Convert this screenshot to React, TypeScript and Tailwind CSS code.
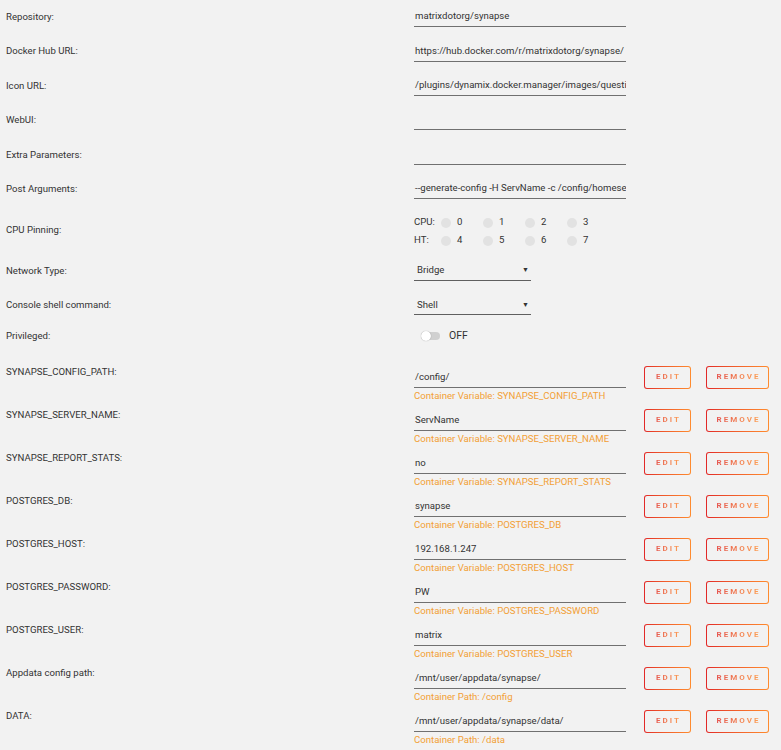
import React from "react";

type EnvVar = {
  label: string;
  value: string;
  note: string;
};

const textRows: { label: string; value: string }[] = [
  { label: "Repository:", value: "matrixdotorg/synapse" },
  { label: "Docker Hub URL:", value: "https://hub.docker.com/r/matrixdotorg/synapse/" },
  { label: "Icon URL:", value: "/plugins/dynamix.docker.manager/images/question.png" },
  { label: "WebUI:", value: "" },
  { label: "Extra Parameters:", value: "" },
  { label: "Post Arguments:", value: "--generate-config -H ServName -c /config/homeserver.yaml" },
];

const envVars: EnvVar[] = [
  { label: "SYNAPSE_CONFIG_PATH:", value: "/config/", note: "Container Variable: SYNAPSE_CONFIG_PATH" },
  { label: "SYNAPSE_SERVER_NAME:", value: "ServName", note: "Container Variable: SYNAPSE_SERVER_NAME" },
  { label: "SYNAPSE_REPORT_STATS:", value: "no", note: "Container Variable: SYNAPSE_REPORT_STATS" },
  { label: "POSTGRES_DB:", value: "synapse", note: "Container Variable: POSTGRES_DB" },
  { label: "POSTGRES_HOST:", value: "192.168.1.247", note: "Container Variable: POSTGRES_HOST" },
  { label: "POSTGRES_PASSWORD:", value: "PW", note: "Container Variable: POSTGRES_PASSWORD" },
  { label: "POSTGRES_USER:", value: "matrix", note: "Container Variable: POSTGRES_USER" },
  { label: "Appdata config path:", value: "/mnt/user/appdata/synapse/", note: "Container Path: /config" },
  { label: "DATA:", value: "/mnt/user/appdata/synapse/data/", note: "Container Path: /data" },
];

function Label({ children }: { children: React.ReactNode }) {
  return <div className="w-[414px] shrink-0 pl-[6px]">{children}</div>;
}

// long values run past the field's right edge and get clipped, like a real input
function TextInput({ value }: { value: string }) {
  return (
    <div className="flex h-[20px] w-[212px] items-center overflow-hidden whitespace-nowrap border-b border-[#707070] pl-px">
      {value}
    </div>
  );
}

function Select({ value }: { value: string }) {
  return (
    <div className="flex h-[20px] w-[117px] items-center justify-between border-b border-[#606060] pl-[3px] pr-[2px]">
      <span>{value}</span>
      <span className="text-[7px]">▼</span>
    </div>
  );
}

function GradientButton({ label, width }: { label: string; width: string }) {
  return (
    <div className={`h-[23px] rounded-[3px] bg-gradient-to-r from-[#e22828] to-[#ff8c2f] p-px ${width}`}>
      <div className="flex h-full items-center justify-center rounded-[2px] bg-[#f2f2f2]">
        <span className="bg-gradient-to-r from-[#e22828] to-[#ff8c2f] bg-clip-text pl-[2px] text-[8px] font-bold tracking-[2px] text-transparent opacity-80">
          {label}
        </span>
      </div>
    </div>
  );
}

function CpuCell({ n }: { n: number }) {
  return (
    <div className="flex w-[42px] items-center">
      <span className="h-[10px] w-[10px] rounded-full bg-[#e2e2e2]" />
      <span className="ml-[6px]">{n}</span>
    </div>
  );
}

export default function App() {
  return (
    <div
      className="min-h-[750px] w-[781px] bg-[#f2f2f2] text-[9.6px] text-[#333]"
      style={{ fontFamily: "Roboto, 'Liberation Sans', sans-serif" }}
    >
      {textRows.map((row) => (
        <div key={row.label} className="flex h-[34.4px] items-center">
          <Label>{row.label}</Label>
          <TextInput value={row.value} />
        </div>
      ))}

      <div className="flex h-[47.4px] items-center">
        <Label>CPU Pinning:</Label>
        <div className="flex flex-col gap-[3px] pt-[3px]">
          <div className="flex h-[15px] items-center">
            <span className="w-[27px]">CPU:</span>
            {[0, 1, 2, 3].map((n) => (
              <CpuCell key={n} n={n} />
            ))}
          </div>
          <div className="flex h-[15px] items-center">
            <span className="w-[27px]">HT:</span>
            {[4, 5, 6, 7].map((n) => (
              <CpuCell key={n} n={n} />
            ))}
          </div>
        </div>
      </div>

      <div className="flex h-[34.4px] items-center">
        <Label>Network Type:</Label>
        <Select value="Bridge" />
      </div>
      <div className="flex h-[34.4px] items-center">
        <Label>Console shell command:</Label>
        <Select value="Shell" />
      </div>
      <div className="mb-[12.4px] flex h-[27px] items-center">
        <Label>Privileged:</Label>
        <div className="ml-[7px] flex items-center">
          <span className="relative h-[8px] w-[19px] rounded-full bg-[#d0d0d0]">
            <span className="absolute -top-px left-0 h-[10px] w-[10px] rounded-full bg-white shadow-[0_0_1px_rgba(0,0,0,0.4)]" />
          </span>
          <span className="ml-[9px] text-[10.5px]">OFF</span>
        </div>
      </div>

      {envVars.map((env) => (
        <div key={env.label} className="flex h-[43px] items-start">
          <Label>
            <div className="pt-[3px]">{env.label}</div>
          </Label>
          <div className="flex flex-col pt-[6px]">
            <TextInput value={env.value} />
            <div className="pt-px text-[#f2a035]">{env.note}</div>
          </div>
          <div className="ml-[18px] flex items-start gap-[15px] pt-[4px]">
            <GradientButton label="EDIT" width="w-[47px]" />
            <GradientButton label="REMOVE" width="w-[63px]" />
          </div>
        </div>
      ))}
    </div>
  );
}
